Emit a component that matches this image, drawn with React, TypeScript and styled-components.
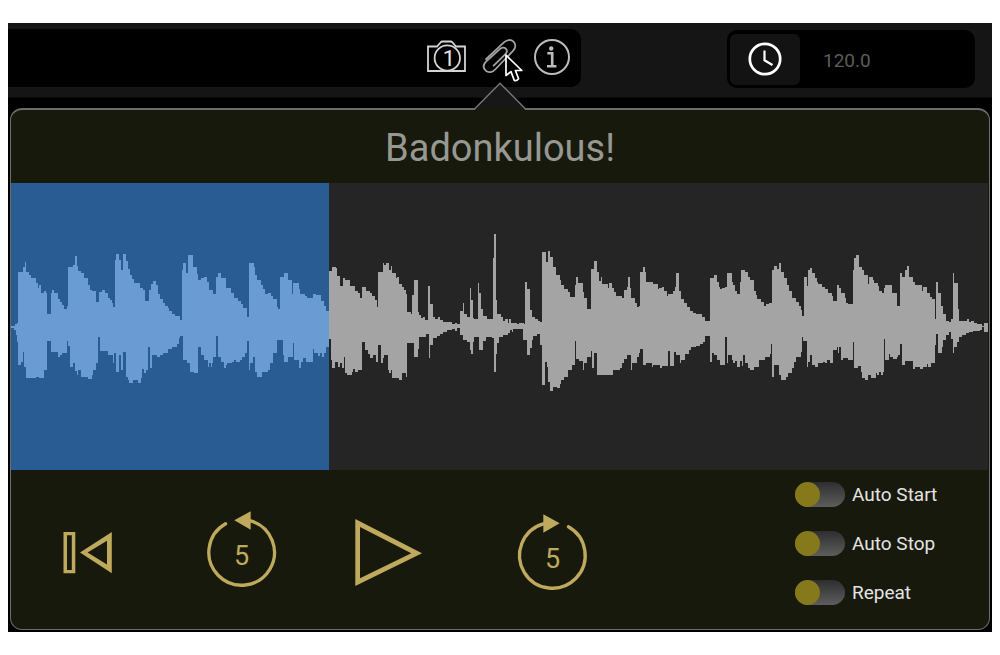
import React, { useState } from "react";
import styled, { createGlobalStyle } from "styled-components";

const GlobalStyle = createGlobalStyle`
  *, *::before, *::after { box-sizing: border-box; }
  body {
    margin: 0;
    background: #fff;
    font-family: Roboto, "Liberation Sans", sans-serif;
  }
  button { font: inherit; }
`;

const gold = "#bfa95c";
const olive = "#18190d";
const edge = "#6c6c6a";

const Window = styled.main`
  margin: 23px 8px;
  padding-bottom: 2px;
  background: #000;
`;

const Toolbar = styled.header`
  display: flex;
  align-items: flex-start;
  gap: 146px;
  height: 75px;
  padding: 6px 17px 0 0;
  background: #151515;
  border-bottom: 1px solid #0c0c0c;
`;

const ToolTray = styled.div`
  flex: 1;
  display: flex;
  align-items: center;
  justify-content: flex-end;
  gap: 17px;
  height: 58px;
  padding: 0 11px 4px 0;
  border-radius: 0 10px 10px 0;
  background: #000;
`;

const PlainButton = styled.button`
  display: flex;
  flex: none;
  padding: 0;
  border: 0;
  background: none;
  color: inherit;
  cursor: pointer;

  svg { display: block; overflow: visible; }
`;

const ClipButton = styled(PlainButton)`
  position: relative;
`;

const Pointer = styled.svg`
  position: absolute;
  left: 22px;
  top: 16px;
`;

const TempoTray = styled.div`
  display: flex;
  align-items: center;
  width: 248px;
  height: 58px;
  margin-top: 1px;
  padding: 3px;
  border-radius: 10px;
  background: #000;
`;

const ClockButton = styled(PlainButton)`
  align-items: center;
  justify-content: center;
  width: 70px;
  height: 51px;
  border-radius: 6px;
  background: #131313;
`;

const TempoInput = styled.input`
  width: 120px;
  margin-left: 23px;
  padding: 4px 0 0;
  border: 0;
  background: none;
  color: #5c5c5c;
  font: 400 19px/24px Roboto, "Liberation Sans", sans-serif;
`;

const Popover = styled.section`
  position: relative;
  margin: 10px 2px 0;
  border: 1px solid ${edge};
  border-top-width: 2px;
  border-radius: 12px;
  background: ${olive};
`;

const PopoverArrow = styled.svg`
  position: absolute;
  top: -28px;
  left: 50%;
  margin-left: -26px;
`;

const Title = styled.h1`
  margin: 0;
  padding-top: 3px;
  color: #979892;
  font-weight: 400;
  font-size: 38px;
  line-height: 70px;
  text-align: center;
`;

const Wave = styled.svg`
  display: block;
  width: 100%;
  height: 287px;
  padding-right: 1px;
`;

const Controls = styled.div`
  display: flex;
  justify-content: space-between;
  height: 159px;
`;

const Transport = styled.div`
  display: flex;
  align-items: flex-start;
  gap: 78px;
  padding: 42px 0 0 52px;
  color: ${gold};
`;

const TransportButton = styled(PlainButton)<{ $width: number }>`
  width: ${(p) => p.$width}px;
`;

const SkipLabel = styled.text`
  fill: ${gold};
  font-family: Roboto, "Liberation Sans", sans-serif;
  font-weight: 400;
  font-size: 27px;
  text-anchor: middle;
`;

const ShotLabel = styled(SkipLabel)`
  fill: #e6e6e6;
  font-size: 22px;
`;

const Options = styled.div`
  display: flex;
  flex-direction: column;
  gap: 24px;
  width: 194px;
  padding-top: 12px;
`;

const Option = styled.label`
  display: flex;
  align-items: center;
  gap: 7px;
  height: 25px;
  color: #e4e4e2;
  font-size: 19px;
  line-height: 25px;
  cursor: pointer;
`;

const Switch = styled.input`
  appearance: none;
  display: flex;
  width: 50px;
  height: 25px;
  margin: 0;
  border-radius: 13px;
  background: linear-gradient(#2e2e30, #5d5d5d);
  cursor: pointer;

  &::before {
    content: "";
    width: 25px;
    height: 25px;
    border-radius: 50%;
    background: #85791c;
  }
  &:checked { justify-content: flex-end; }
`;

/* Envelope steps as "position:level"; each level holds until the next position. */
const upper =
  "11:106 15:104 17:103 18:52 23:47 25:42 26:52 29:55 31:58 36:63 38:68 39:65 41:73 44:71 46:73 47:94 51:73 52:70 54:73 58:79 60:82 62:85 64:89 67:86 68:47 73:45 75:36 77:46 78:51 81:53 84:58 88:65 90:70 92:71 96:82 99:72 102:70 105:73 108:78 110:80 112:83 113:87 115:40 116:34 119:40 121:50 123:34 126:41 128:49 130:55 132:59 134:63 140:68 143:70 145:81 149:70 151:64 153:61 156:65 158:74 160:79 163:83 165:86 168:88 169:91 172:94 175:96 180:100 " +
  "182:50 183:43 186:53 188:35 193:47 197:54 198:60 201:58 204:57 207:62 209:70 213:74 216:57 218:53 221:58 226:68 231:73 234:78 238:81 241:84 243:88 247:97 249:43 254:47 255:55 257:60 261:65 263:69 265:74 268:73 271:76 273:79 277:87 278:89 280:57 284:53 288:60 292:74 293:63 299:69 300:74 305:76 307:78 313:74 316:75 321:81 324:86 326:91 " +
  "329:51 332:47 336:48 337:56 340:66 343:58 345:60 350:66 355:71 358:73 360:78 362:67 366:71 370:73 372:76 375:80 377:87 378:52 383:43 384:45 386:43 389:50 391:46 392:53 396:58 397:57 399:64 402:67 404:70 406:74 407:92 411:94 412:75 414:60 418:92 419:95 421:98 423:97 425:100 428:66 430:84 433:97 435:99 438:97 440:100 443:102 452:104 455:103 457:104 460:91 463:83 464:94 467:97 470:68 471:80 473:98 474:99 478:63 479:73 481:89 483:96 487:99 493:38 494:14 496:80 497:94 501:97 503:101 505:99 508:103 509:99 511:103 517:104 519:103 524:104 525:62 527:69 530:90 532:97 535:99 538:101 540:102 " +
  "542:32 546:42 548:31 550:37 553:47 556:55 560:60 561:65 564:69 568:72 570:77 575:65 576:57 578:63 583:72 584:78 587:89 591:49 594:41 597:52 599:61 601:57 602:64 608:68 609:63 612:68 614:72 616:76 622:78 624:70 627:67 628:57 630:68 631:78 635:83 637:87 639:86 640:52 643:47 645:52 646:62 653:64 658:69 659:68 662:67 664:71 667:76 668:74 673:71 675:67 676:53 679:71 681:79 684:83 687:87 690:91 693:93 696:94 702:97 705:101 " +
  "710:58 714:55 717:62 719:67 720:69 722:68 725:67 727:53 732:62 733:65 735:71 737:74 740:62 741:50 745:52 748:57 750:60 754:71 756:75 757:79 761:82 764:86 766:84 769:83 772:50 774:46 777:49 779:43 781:52 784:58 787:65 789:71 792:78 796:82 799:86 801:90 802:96 804:57 807:66 808:50 810:48 812:53 815:58 817:62 818:64 822:67 825:69 828:73 832:76 833:81 837:65 839:68 841:73 845:78 846:83 848:84 " +
  "853:50 854:38 856:35 859:47 862:50 864:55 868:64 869:57 873:60 874:63 878:66 879:71 882:73 884:68 885:65 892:73 897:86 900:53 902:57 905:50 907:46 909:57 913:62 915:65 922:71 923:67 927:73 930:77 932:79 935:99 936:62 938:73 941:86 943:94 946:101 949:102 951:99 953:53 954:63 958:89 959:101 967:99 969:102 971:101 974:103 977:104 982:106 984:103 988:103";

const lower =
  "11:108 14:110 16:115 17:122 18:145 21:142 23:132 24:147 26:158 36:157 39:158 44:150 47:121 51:132 58:137 60:135 62:133 67:121 68:126 70:147 73:143 75:151 77:155 78:150 81:157 88:159 92:155 93:150 96:143 98:117 100:131 108:135 113:143 114:133 116:152 119:135 121:150 123:132 126:157 128:160 129:163 133:160 138:163 141:158 142:149 144:153 146:150 148:127 150:148 152:135 157:137 160:135 163:133 168:129 172:127 177:124 179:118 180:116 " +
  "183:140 187:143 190:152 194:153 198:127 201:135 204:140 208:147 209:143 211:147 212:143 213:137 216:116 218:137 221:142 224:148 226:145 227:143 232:142 234:140 236:142 240:140 242:137 245:133 247:121 249:150 250:143 253:137 255:152 257:157 262:152 268:150 270:143 273:133 277:120 283:135 284:142 288:137 293:123 294:140 299:148 301:142 303:138 306:142 313:129 314:133 318:136 320:133 322:137 324:133 326:127 " +
  "329:119 331:140 332:148 335:142 338:147 340:143 342:148 344:137 345:153 347:155 352:152 353:149 355:152 358:150 362:122 365:130 368:134 370:138 373:135 376:142 378:125 381:143 383:138 384:135 388:150 389:153 391:150 392:158 399:160 402:153 406:157 407:123 414:137 418:129 419:117 426:114 429:138 430:125 433:118 437:116 440:114 443:112 447:110 452:109 455:111 457:108 460:115 463:120 467:122 470:130 471:134 473:122 474:117 479:130 483:121 486:117 492:118 494:152 496:134 497:123 499:117 503:115 508:113 510:110 512:112 513:109 523:120 527:135 530:128 532:120 533:116 537:114 540:125 " +
  "542:165 545:142 547:147 548:162 550:171 553:167 557:168 560:164 561:160 564:157 568:150 572:145 575:121 576:139 579:141 583:150 584:143 587:137 591:131 592:148 594:133 597:155 613:150 620:148 622:143 624:139 627:135 631:150 632:143 637:137 639:133 640:129 643:145 646:143 652:147 653:145 660:148 662:146 668:131 670:146 674:132 676:135 680:143 681:140 685:134 689:130 691:127 696:126 700:124 703:122 705:116 " +
  "710:142 712:133 714:135 717:140 720:145 725:117 727:143 728:135 732:140 733:143 735:141 737:147 740:141 742:146 743:135 745:143 748:148 750:150 754:147 759:140 765:137 770:134 771:124 772:157 774:145 779:155 781:160 786:157 788:153 792:148 794:142 796:137 801:132 802:117 803:121 807:147 808:142 810:135 812:145 815:147 818:143 823:142 825:143 827:140 830:143 833:130 837:127 838:133 839:127 841:140 843:138 848:140 " +
  "853:122 854:148 858:146 861:152 862:158 865:160 868:155 871:158 876:153 877:155 879:152 881:155 883:152 884:119 885:140 889:134 890:137 893:139 897:137 898:135 900:124 902:145 905:141 913:149 915:147 920:149 923:147 927:144 928:147 931:143 935:125 936:114 938:133 942:127 943:120 946:115 949:112 951:119 953:133 954:127 957:122 959:117 962:115 966:113 969:112 973:111 980:110 982:107 984:112 988:112";

const parse = (s: string) => s.split(" ").map((p) => p.split(":").map(Number));

function envelopePath() {
  const top = parse(upper);
  const bottom = parse(lower);
  const forward = top.map(([x, y]) => `H${x}V${y}`).join("");
  const back = bottom
    .slice()
    .reverse()
    .map(([x, y]) => `V${y}H${x}`)
    .join("");
  return `M11 106${forward}${back}Z`;
}

const envelope = envelopePath();

function Waveform({ playedTo }: { playedTo: number }) {
  return (
    <Wave
      viewBox="11 -37 977 287"
      preserveAspectRatio="none"
      shapeRendering="crispEdges"
      role="img"
      aria-label="Waveform"
    >
      <defs>
        <clipPath id="played">
          <rect x="11" y="-37" width={playedTo - 11} height="287" />
        </clipPath>
      </defs>
      <rect x="11" y="-37" width="977" height="287" fill="#252525" />
      <path d={envelope} fill="#a4a4a4" />
      <g clipPath="url(#played)">
        <rect x="11" y="-37" width="977" height="287" fill="#285c93" />
        <path d={envelope} fill="#6b9bd3" />
      </g>
    </Wave>
  );
}

function CameraIcon() {
  return (
    <svg width="39" height="36" fill="none" stroke="#d4d4d4" strokeWidth="1.8">
      <path d="M1 8.5H10L13.5 4.5Q14.3 3.5 15.5 3.5H23.5Q24.7 3.5 25.5 4.5L29 8.5H38V33H1Z" />
      <circle cx="20.3" cy="20" r="12.7" />
      <ShotLabel x="22" y="28" stroke="none">1</ShotLabel>
    </svg>
  );
}

function ClipIcon() {
  return (
    <svg
      width="34"
      height="36"
      fill="none"
      stroke="#a2a2a2"
      strokeWidth="1.8"
      strokeLinecap="round"
    >
      <path d="M3 21.2L21.2 4.2C24 1.6 28 1.2 30.5 3.6C33.2 6.2 32.7 10.2 30 12.9L12.2 31.5C9.7 34.2 5.6 35.3 2.7 32.6C-.2 29.8 .4 26.3 3 23.6L16.8 11.2C18.8 9.4 21.4 9.2 22.9 10.8C24.4 12.4 24 14.6 22.2 16.4L10.6 27.7" />
    </svg>
  );
}

function InfoIcon() {
  return (
    <svg width="36" height="36" fill="none" stroke="#bcbcbc" strokeWidth="2">
      <circle cx="18" cy="19" r="17" />
      <circle cx="17.2" cy="10.5" r="2.2" fill="#bcbcbc" stroke="none" />
      <path d="M13.3 15.3H18.2V28M13 28.2H22.4" strokeWidth="2.6" />
    </svg>
  );
}

function ClockIcon() {
  return (
    <svg width="34" height="34" fill="none" stroke="#fff">
      <circle cx="17" cy="17" r="15.2" strokeWidth="2.7" />
      <path d="M16.5 8.5V18.3L24.5 23" strokeWidth="2.2" />
    </svg>
  );
}

function SkipIcon({ forward = false }: { forward?: boolean }) {
  const drop = forward ? 3 : 0;
  return (
    <svg width="70" height="80">
      <g transform={`translate(0 ${drop})`}>
        <g transform={forward ? "translate(69 0) scale(-1 1)" : undefined}>
          <path
            d="M18.6 11.8A32.8 32.8 0 1 0 43.7 8.9"
            fill="none"
            stroke={gold}
            strokeWidth="3.3"
            strokeLinecap="round"
          />
          <path d="M27.3 8.3L43.7 -.7V17.7Z" fill={gold} />
        </g>
        <SkipLabel x="34.5" y="53">5</SkipLabel>
      </g>
    </svg>
  );
}

function ToStartIcon() {
  return (
    <svg width="50" height="80" fill={gold} fillRule="evenodd">
      <path d="M.5 20H12.3V61.3H.5ZM4 23.3V58H8.8V23.3Z" />
      <path d="M17 40.5L48.8 20V61.3ZM24.6 40.5L44 52.5V28.7Z" />
    </svg>
  );
}

function PlayIcon() {
  return (
    <svg width="68" height="80" fill={gold} fillRule="evenodd">
      <path d="M.3 7L67 41.3L.3 74ZM5 15V66.3L56.3 41.3Z" />
    </svg>
  );
}

export default function App() {
  const [tempo, setTempo] = useState("120.0");
  return (
    <>
      <GlobalStyle />
      <Window>
        <Toolbar>
          <ToolTray>
            <PlainButton aria-label="Snapshot"><CameraIcon /></PlainButton>
            <ClipButton aria-label="Attachments">
              <ClipIcon />
              <Pointer width="18" height="30" fill="#000" stroke="#fff" strokeWidth="1.7" strokeLinejoin="round">
                <path d="M1 1.2V21.5L6 17.6L9.2 26.2Q11.3 27.6 13.6 24.8L10.4 16.5H16.8Z" />
              </Pointer>
            </ClipButton>
            <PlainButton aria-label="Information"><InfoIcon /></PlainButton>
          </ToolTray>
          <TempoTray>
            <ClockButton aria-label="Metronome"><ClockIcon /></ClockButton>
            <TempoInput
              aria-label="Tempo"
              value={tempo}
              onChange={(e) => setTempo(e.target.value)}
            />
          </TempoTray>
        </Toolbar>
        <Popover>
          <PopoverArrow width="52" height="30" aria-hidden="true">
            <path d="M0 28L26 2L52 28V30H0Z" fill={olive} />
            <path d="M2 26L26 2L50 26Z" fill="#171717" />
            <path d="M0 27.5L26 1.2L52 27.5" fill="none" stroke="#777" strokeWidth="1.4" />
          </PopoverArrow>
          <Title>Badonkulous!</Title>
          <Waveform playedTo={329} />
          <Controls>
            <Transport>
              <TransportButton $width={66} aria-label="Go to start"><ToStartIcon /></TransportButton>
              <TransportButton $width={70} aria-label="Back 5 seconds"><SkipIcon /></TransportButton>
              <TransportButton $width={85} aria-label="Play"><PlayIcon /></TransportButton>
              <TransportButton $width={70} aria-label="Forward 5 seconds"><SkipIcon forward /></TransportButton>
            </Transport>
            <Options>
              {["Auto Start", "Auto Stop", "Repeat"].map((name) => (
                <Option key={name}>
                  <Switch type="checkbox" />
                  {name}
                </Option>
              ))}
            </Options>
          </Controls>
        </Popover>
      </Window>
    </>
  );
}
